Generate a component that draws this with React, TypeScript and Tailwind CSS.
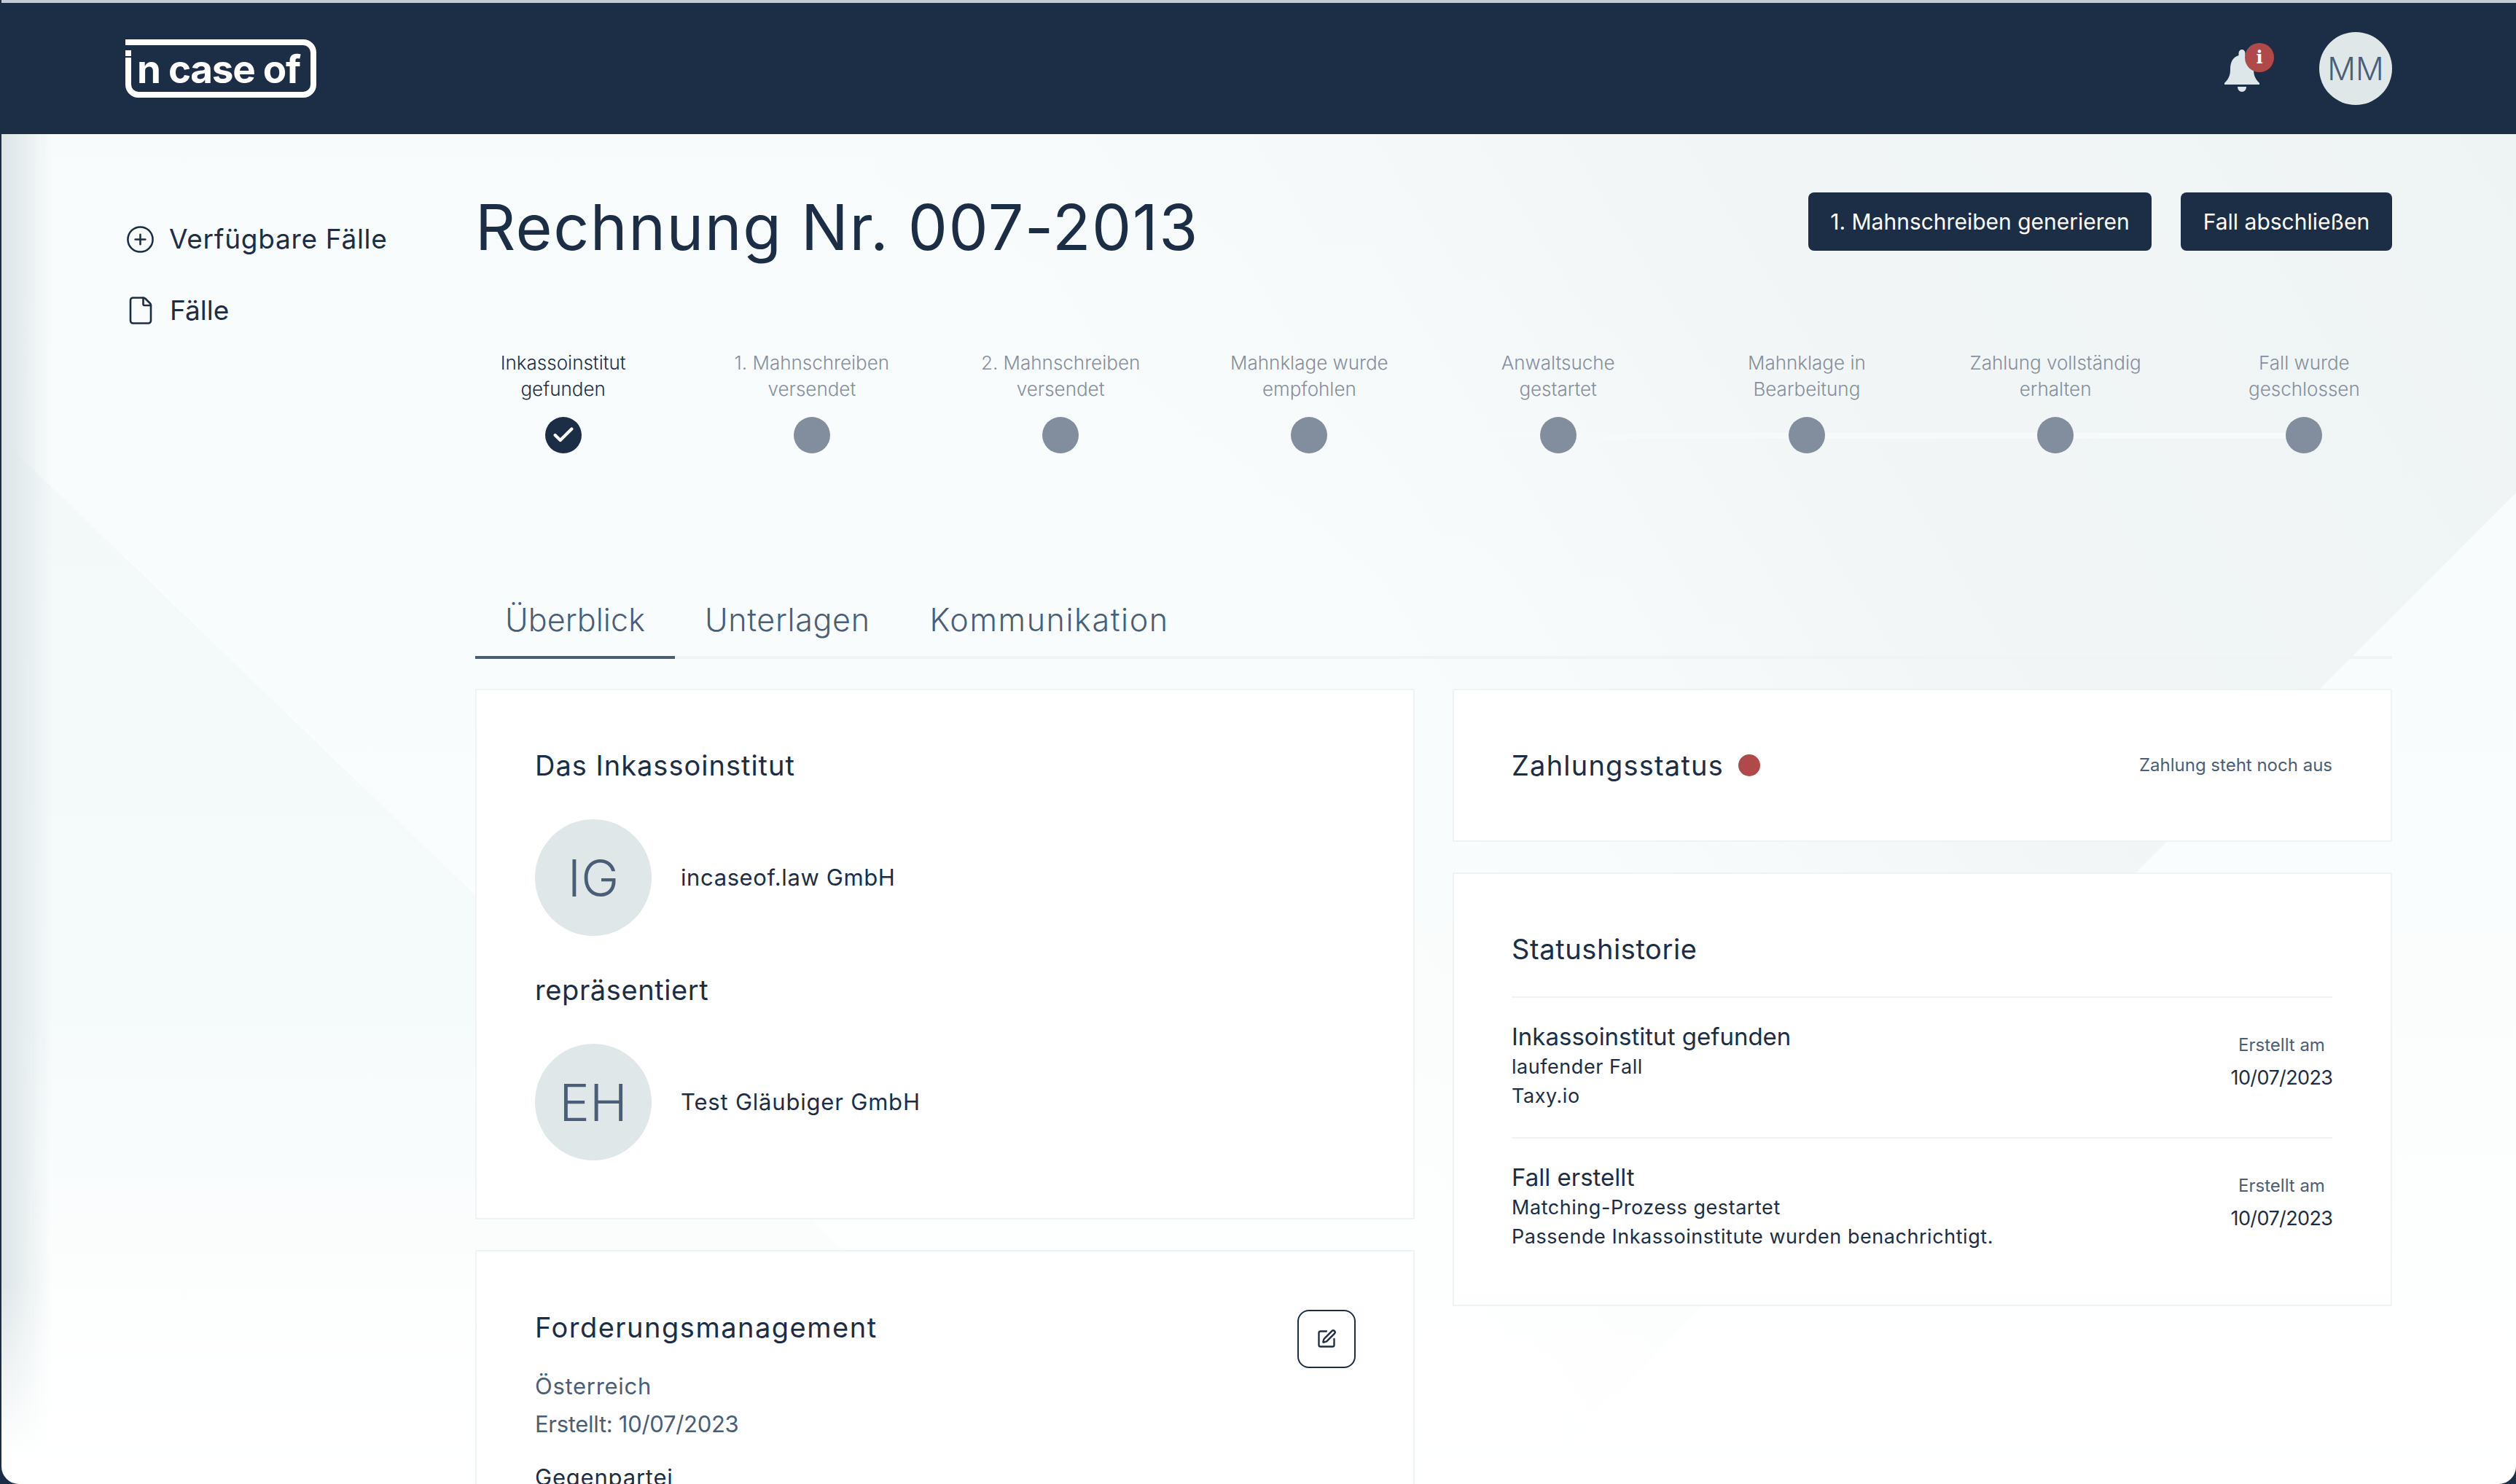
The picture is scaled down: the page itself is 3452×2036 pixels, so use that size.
import { CirclePlus, File, SquarePen, Check } from "lucide-react";

const steps = [
  ["Inkassoinstitut", "gefunden"],
  ["1. Mahnschreiben", "versendet"],
  ["2. Mahnschreiben", "versendet"],
  ["Mahnklage wurde", "empfohlen"],
  ["Anwaltsuche", "gestartet"],
  ["Mahnklage in", "Bearbeitung"],
  ["Zahlung vollständig", "erhalten"],
  ["Fall wurde", "geschlossen"],
];

const history = [
  {
    title: "Inkassoinstitut gefunden",
    lines: ["laufender Fall", "Taxy.io"],
  },
  {
    title: "Fall erstellt",
    lines: ["Matching-Prozess gestartet", "Passende Inkassoinstitute wurden benachrichtigt."],
  },
];

const Logo = () => (
  <div className="relative h-[80px] w-[262px]">
    <svg viewBox="0 0 262 80" className="h-full w-full">
      <path
        d="M0 4H244A14 14 0 0 1 258 18V62A14 14 0 0 1 244 76H18A14 14 0 0 1 4 62V25"
        fill="none"
        stroke="#fff"
        strokeWidth="8"
      />
      <rect x="0" y="15" width="8" height="8" fill="#fff" />
    </svg>
    <span className="absolute left-[16px] top-[7px] font-['Inter',sans-serif] text-[53px] leading-[68px] font-bold tracking-[-1.3px] text-white">
      n case of
    </span>
  </div>
);

const Bell = () => (
  <div className="relative h-[60px] w-[70px]">
    <svg viewBox="0 0 48 58" className="absolute left-0 top-[4px] h-[58px] w-[48px]" fill="#dde6e8">
      <path d="M24 0c-3 0-4.500 2.500-4.500 6v2C11 10.500 8 18 8 27c0 8-2 13-8 19v2h48v-2c-6-6-8-11-8-19 0-9-3-16.500-11.500-19V6C28.500 2.500 27 0 24 0z" />
      <path d="M18 51h12c0 4-2.500 7-6 7s-6-3-6-7z" />
    </svg>
    <div className="absolute left-[28px] top-[-5px] flex h-[40px] w-[40px] items-center justify-center rounded-full bg-[#b04a4a] font-['DejaVu_Serif',serif] text-[24px] leading-none font-bold text-white">
      i
    </div>
  </div>
);

const Card = ({ className, children }: { className?: string; children: React.ReactNode }) => (
  <div className={`border-2 border-[#eef3f4] bg-white ${className ?? ""}`}>{children}</div>
);

const Avatar = ({ label }: { label: string }) => (
  <div className="flex h-[160px] w-[160px] shrink-0 items-center justify-center rounded-full bg-[#dfe7e8] text-[70px] font-light text-[#4a5e78]">
    {label}
  </div>
);

export default function App() {
  return (
    <div className="h-[2036px] w-[3452px] overflow-hidden bg-[#1c2e46] pl-[2px] font-['Inter',sans-serif] text-[#1c2e46]">
      <div className="h-[4px] bg-[#c3cbd4]" />
      <header className="flex h-[180px] items-center justify-between bg-[#1c2e46] pl-[170px] pr-[170px]">
        <Logo />
        <div className="flex items-center gap-[60px]">
          <Bell />
          <div className="flex h-[100px] w-[100px] items-center justify-center rounded-full bg-[#dfe7e8] text-[43px] font-light text-[#4a5e78]">
            MM
          </div>
        </div>
      </header>

      <div className="relative flex h-[1852px] overflow-hidden rounded-bl-[24px] rounded-br-[24px] bg-[linear-gradient(180deg,#f8fbfc_0%,#fafdfd_50%,#ffffff_100%)] pl-[170px] pr-[170px]">
        {/* background shapes */}
        <svg viewBox="0 0 3450 1852" className="absolute inset-0 h-full w-full">
          <defs>
            <linearGradient id="bgLeft" x1="0" y1="0" x2="0" y2="1">
              <stop offset="0" stopColor="#f3f8f9" />
              <stop offset="0.55" stopColor="#f5fafb" />
              <stop offset="1" stopColor="#ffffff" stopOpacity="0" />
            </linearGradient>
            <linearGradient id="bgRight" gradientUnits="userSpaceOnUse" x1="3450" y1="0" x2="1700" y2="1100">
              <stop offset="0" stopColor="#eef3f4" />
              <stop offset="0.5" stopColor="#f2f6f7" />
              <stop offset="1" stopColor="#f8fbfc" stopOpacity="0" />
            </linearGradient>
          </defs>
          <path d="M0 418L1320 1690V1852H0z" fill="url(#bgLeft)" />
          <path d="M1200 0H3450V492L1920 2022H1200z" fill="url(#bgRight)" />
        </svg>
        <div className="absolute inset-y-0 left-0 w-[70px] bg-[linear-gradient(90deg,#dbe4e6,#f7fbfc00)] [mask-image:linear-gradient(180deg,#000_85%,transparent_98%)]" />

        <aside className="relative w-[480px] shrink-0 pt-[124px]">
          <a className="flex h-[40px] items-center gap-[19px] text-[37px] font-normal tracking-[0.7px]">
            <CirclePlus className="h-[41px] w-[41px]" strokeWidth={1.5} />
            Verfügbare Fälle
          </a>
          <a className="mt-[58px] flex h-[40px] items-center gap-[19px] text-[37px] font-normal">
            <File className="h-[42px] w-[42px]" strokeWidth={1.5} />
            Fälle
          </a>
        </aside>

        <main className="relative flex-1">
          <div className="flex items-start justify-between pt-[80px]">
            <h1 className="text-[86px] leading-[96px] font-normal tracking-[1.5px]">Rechnung Nr. 007-2013</h1>
            <div className="flex gap-[40px]">
              <button className="h-[80px] w-[471px] rounded-[8px] bg-[#1c2e46] text-[30px] font-normal text-white">
                1. Mahnschreiben generieren
              </button>
              <button className="h-[80px] w-[290px] rounded-[8px] bg-[#1c2e46] text-[30px] font-normal text-white">
                Fall abschließen
              </button>
            </div>
          </div>

          <div className="relative -mx-[50px] mt-[120px] grid grid-cols-8">
            <div className="absolute left-[170px] right-[170px] top-[114px] h-[8px] bg-[linear-gradient(90deg,transparent_30%,#f6fafb_70%)]" />
            {steps.map((s, i) => (
              <div key={s[0]} className="relative flex flex-col items-center">
                <div
                  className={`text-center text-[26px] leading-[36px] font-light ${
                    i === 0 ? "text-[#1c2e46]" : "text-[#858f9d]"
                  }`}
                >
                  {s[0]}
                  <br />
                  {s[1]}
                </div>
                {i === 0 ? (
                  <div className="mt-[20px] flex h-[50px] w-[50px] items-center justify-center rounded-full bg-[#1c2e46]">
                    <Check className="h-[34px] w-[34px] text-white" strokeWidth={3} />
                  </div>
                ) : (
                  <div className="mt-[20px] h-[50px] w-[50px] rounded-full bg-[#828e9d]" />
                )}
              </div>
            ))}
          </div>

          <div className="mt-[182px] flex h-[100px] border-b-4 border-[#f0f4f5] text-[43px] font-light text-[#4a5e78]">
            <div className="-mb-[4px] flex items-center border-b-4 border-[#4a5e78] px-[41px] pb-[4px] tracking-[0.1px]">
              Überblick
            </div>
            <div className="flex items-center px-[41px] pb-[4px] tracking-[0.66px]">Unterlagen</div>
            <div className="flex items-center px-[41px] pb-[4px] tracking-[1.6px]">Kommunikation</div>
          </div>

          <div className="mt-[41px] grid grid-cols-[1289px_1289px] justify-between">
            <div className="flex flex-col gap-[42px]">
              <Card className="h-[728px] px-[80px] pt-[79px]">
                <h2 className="text-[38px] leading-[48px] font-normal tracking-[1px]">Das Inkassoinstitut</h2>
                <div className="mt-[50px] flex items-center gap-[40px]">
                  <Avatar label="IG" />
                  <span className="text-[31px] font-normal tracking-[0.6px]">incaseof.law GmbH</span>
                </div>
                <h2 className="mt-[50px] text-[38px] leading-[48px] font-normal tracking-[0.6px]">repräsentiert</h2>
                <div className="mt-[50px] flex items-center gap-[40px]">
                  <Avatar label="EH" />
                  <span className="text-[31px] font-normal tracking-[0.8px]">Test Gläubiger GmbH</span>
                </div>
              </Card>
              <Card className="h-[400px] pl-[80px] pr-[79px] pt-[80px]">
                <div className="flex items-start justify-between">
                  <div>
                    <h2 className="text-[38px] leading-[48px] font-normal tracking-[1.5px]">Forderungsmanagement</h2>
                    <p className="mt-[31px] text-[31px] leading-[52px] font-normal tracking-[0.7px] text-[#4a5e78]">
                      Österreich
                    </p>
                    <p className="text-[31px] leading-[52px] font-normal tracking-[-0.3px] text-[#4a5e78]">
                      Erstellt: 10/07/2023
                    </p>
                    <h3 className="mt-[21px] text-[31px] leading-[52px] font-normal tracking-[0.8px]">Gegenpartei</h3>
                  </div>
                  <button className="flex h-[80px] w-[80px] items-center justify-center rounded-[16px] border-2 border-[#1c2e46]">
                    <SquarePen className="h-[28px] w-[28px]" strokeWidth={2} />
                  </button>
                </div>
              </Card>
            </div>

            <div className="flex flex-col gap-[42px] self-start">
              <Card className="flex h-[210px] items-center justify-between pl-[79px] pr-[80px]">
                <div className="flex items-center gap-[20px]">
                  <h2 className="text-[38px] font-normal tracking-[1.2px]">Zahlungsstatus</h2>
                  <span className="h-[30px] w-[30px] rounded-full bg-[#b04a4a]" />
                </div>
                <span className="text-[24px] font-normal text-[#4a5e78]">Zahlung steht noch aus</span>
              </Card>
              <Card className="h-[595px] pl-[79px] pr-[80px] pt-[77px]">
                <h2 className="text-[38px] leading-[52px] font-normal tracking-[0.6px]">Statushistorie</h2>
                <div className="mt-[39px]">
                  {history.map((h) => (
                    <div key={h.title} className="flex h-[193px] items-start justify-between border-t-2 border-[#eef3f4] pt-[31px]">
                      <div>
                        <div className="text-[33px] leading-[44px] font-normal">{h.title}</div>
                        <div className="text-[27px] leading-[40px] font-normal tracking-[0.55px]">{h.lines[0]}</div>
                        <div className="text-[27px] leading-[40px] font-normal tracking-[0.55px]">{h.lines[1]}</div>
                      </div>
                      <div className="flex w-[139px] flex-col items-center pt-[17px]">
                        <div className="text-[24px] leading-[34px] font-normal text-[#4a5e78]">Erstellt am</div>
                        <div className="mt-[8px] text-[27px] leading-[40px] font-normal tracking-[-0.6px]">10/07/2023</div>
                      </div>
                    </div>
                  ))}
                </div>
              </Card>
            </div>
          </div>
        </main>
      </div>
    </div>
  );
}
